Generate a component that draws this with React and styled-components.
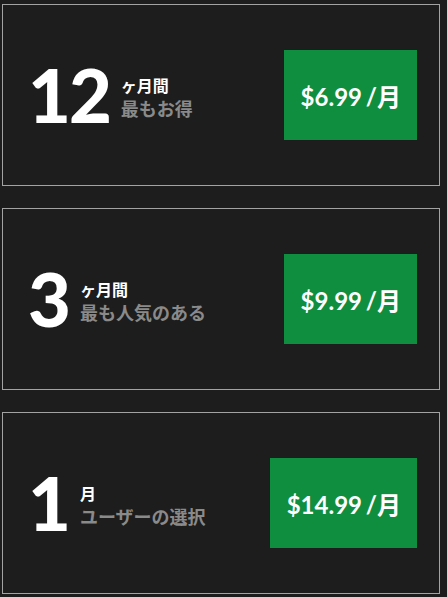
import React from 'react';
import styled, { createGlobalStyle } from 'styled-components';

const GlobalStyle = createGlobalStyle`
  html, body {
    margin: 0;
    padding: 0;
    background: #1d1d1d;
  }
  body {
    font-family: Lato, "Noto Sans CJK JP", sans-serif;
  }
`;

const Page = styled.div`
  display: flex;
  flex-direction: column;
  gap: 22px;
  width: 438px;
  padding: 4px 0 0 2px;
`;

const Card = styled.div`
  display: flex;
  align-items: center;
  justify-content: space-between;
  height: 182px;
  box-sizing: border-box;
  border: 1px solid #a3a3a3;
  padding: 0 22px 0 25px;
`;

const Term = styled.div`
  display: flex;
  align-items: center;
  gap: 11px;
`;

const Count = styled.div`
  font-family: Lato, sans-serif;
  font-weight: 900;
  font-size: 74px;
  line-height: 1;
  color: #ffffff;
  letter-spacing: -2px;
`;

const Labels = styled.div`
  display: flex;
  flex-direction: column;
  font-family: "Noto Sans CJK JP", sans-serif;
  font-weight: 700;
  padding-top: 3px;
`;

const Unit = styled.span`
  font-size: 16px;
  line-height: 22px;
  color: #ffffff;
`;

const Note = styled.span`
  font-size: 18px;
  line-height: 24px;
  color: #8a8a8a;
`;

const PriceButton = styled.button`
  height: 90px;
  padding: 0 16px 0 17px;
  border: none;
  background: #0f8e40;
  color: #ffffff;
  font-family: Lato, "Noto Sans CJK JP", sans-serif;
  font-weight: 700;
  font-size: 24px;
  word-spacing: -2px;
  cursor: pointer;
  white-space: nowrap;
`;

const plans = [
  { count: '12', unit: 'ヶ月間', note: '最もお得', price: '$6.99 /月' },
  { count: '3', unit: 'ヶ月間', note: '最も人気のある', price: '$9.99 /月' },
  { count: '1', unit: '月', note: 'ユーザーの選択', price: '$14.99 /月' },
];

export default function App() {
  return (
    <>
      <GlobalStyle />
      <Page>
        {plans.map((p) => (
          <Card key={p.count}>
            <Term>
              <Count>{p.count}</Count>
              <Labels>
                <Unit>{p.unit}</Unit>
                <Note>{p.note}</Note>
              </Labels>
            </Term>
            <PriceButton>{p.price}</PriceButton>
          </Card>
        ))}
      </Page>
    </>
  );
}
